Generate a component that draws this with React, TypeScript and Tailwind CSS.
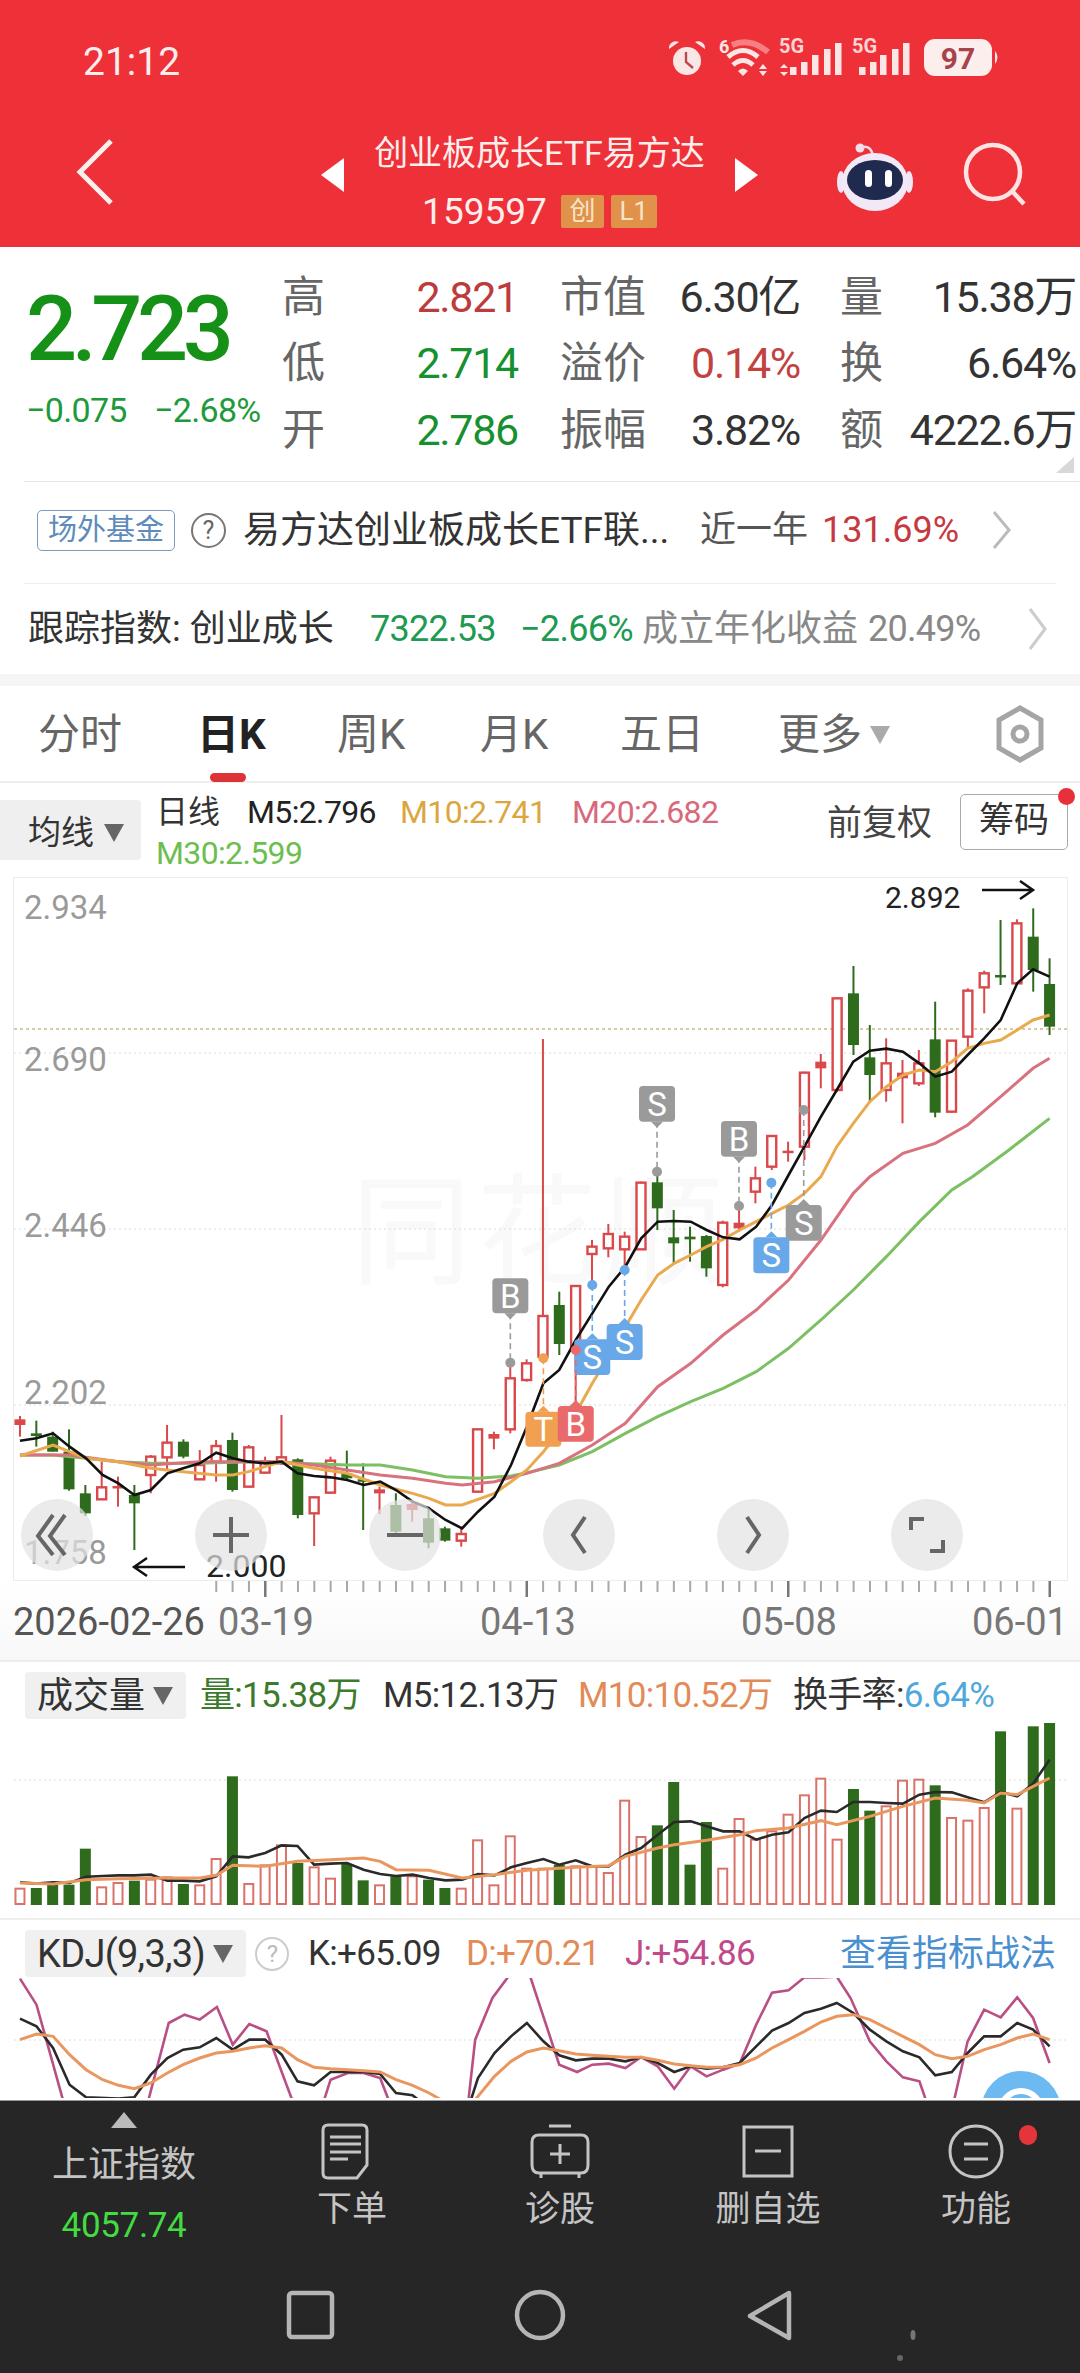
import React from 'react';

type P = [number, number];

const X = (z: number) => z / 1.452;
const Y = (z: number) => 1150 + z / 3;
const pts = (a: P[], fy: (v: number) => number) => a.map(([x, y]) => `${X(x)},${fy(y)}`).join(' ');
const RED = '#d9484a';
const GREEN = '#2f6b1c';

// kind, wick top, wick bottom, body top, body bottom (zoomed chart units)
const candles: [string, number, number, number, number][] = [
  ['R', 798, 860, 808, 825], ['g', 812, 890, 850, 858], ['g', 845, 905, 860, 905], ['g', 838, 1022, 905, 1018],
  ['g', 1005, 1098, 1030, 1090], ['r', 935, 1050, 1012, 1048], ['R', 980, 1070, 1008, 1012], ['g', 1005, 1200, 1035, 1060],
  ['r', 915, 1030, 920, 975], ['r', 825, 960, 878, 922], ['g', 868, 925, 875, 920], ['r', 900, 990, 945, 988],
  ['r', 870, 995, 888, 935], ['g', 848, 1025, 870, 1020], ['r', 885, 1012, 892, 1010], ['r', 920, 970, 935, 968],
  ['r', 795, 945, 922, 940], ['g', 925, 1105, 928, 1095], ['r', 1040, 1188, 1042, 1090], ['r', 920, 1030, 932, 1028],
  ['g', 902, 990, 970, 985], ['g', 940, 1140, 988, 992], ['R', 1010, 1092, 1018, 1030], ['g', 1030, 1150, 1065, 1145],
  ['R', 1055, 1115, 1062, 1080], ['g', 1070, 1195, 1105, 1178], ['g', 1130, 1175, 1135, 1172], ['r', 1130, 1190, 1152, 1172],
  ['r', 838, 1028, 838, 1025], ['R', 845, 898, 852, 866], ['r', 640, 850, 685, 838], ['r', 628, 695, 640, 690],
  ['r', -333, 635, 498, 620], ['g', 425, 615, 465, 582], ['r', 405, 760, 408, 600], ['r', 270, 395, 290, 312],
  ['r', 222, 322, 252, 295], ['r', 245, 350, 260, 298], ['r', 95, 300, 98, 298], ['g', 60, 240, 97, 175],
  ['g', 180, 340, 262, 280], ['g', 230, 335, 260, 268], ['g', 255, 380, 258, 355], ['r', 212, 412, 218, 405],
  ['R', 165, 245, 218, 235], ['r', 50, 160, 85, 125], ['r', -45, 60, -42, 50], ['R', -25, 35, 2, 8],
  ['r', -235, 30, -232, -10], ['R', -288, -185, -265, -245], ['r', -458, -175, -455, -180], ['g', -552, -285, -470, -315],
  ['g', -375, -145, -278, -225], ['r', -335, -145, -260, -180], ['R', -270, -80, -232, -215], ['r', -300, -192, -260, -200],
  ['g', -445, -98, -332, -112], ['r', -330, -112, -328, -115], ['r', -485, -305, -478, -340], ['r', -538, -410, -530, -488],
  ['g', -690, -495, -525, -522], ['r', -692, -495, -680, -500], ['g', -725, -475, -640, -540], ['g', -575, -345, -498, -370],
];

const m5: P[] = [[29,872],[53,865],[77,850],[101,890],[125,925],[149,975],[172,1000],[195,1035],[219,1020],[243,970],[266,955],[290,940],[314,908],[338,925],[361,935],[385,940],[409,935],[432,970],[456,978],[480,982],[504,990],[528,1005],[552,995],[575,1020],[599,1055],[623,1075],[647,1110],[671,1135],[694,1085],[718,1040],[742,945],[765,830],[789,700],[812,660],[836,570],[860,490],[884,410],[908,350],[931,265],[955,215],[979,213],[1003,215],[1026,240],[1050,262],[1074,268],[1098,230],[1121,165],[1145,75],[1168,-10],[1192,-100],[1215,-180],[1239,-265],[1263,-298],[1287,-304],[1311,-295],[1335,-260],[1358,-220],[1382,-235],[1405,-285],[1429,-335],[1453,-390],[1477,-500],[1500,-542],[1524,-520]];
const m10: P[] = [[29,918],[77,885],[101,905],[125,925],[172,935],[219,955],[266,965],[314,975],[338,975],[361,965],[409,935],[456,955],[504,970],[552,1005],[599,1030],[623,1045],[647,1065],[671,1065],[694,1048],[718,1030],[742,995],[765,960],[789,905],[812,845],[836,790],[860,700],[884,620],[908,530],[931,450],[955,375],[979,340],[1003,315],[1026,290],[1050,268],[1074,240],[1098,215],[1121,190],[1145,165],[1168,130],[1192,80],[1215,-10],[1239,-80],[1263,-145],[1287,-190],[1311,-225],[1335,-240],[1358,-235],[1382,-265],[1405,-305],[1429,-320],[1453,-330],[1477,-360],[1500,-390],[1524,-405]];
const m20: P[] = [[29,915],[101,915],[172,935],[219,945],[290,935],[361,935],[409,935],[456,945],[504,960],[552,975],[599,985],[647,1000],[671,1005],[718,995],[765,970],[812,940],[860,885],[908,820],[955,710],[1003,640],[1050,555],[1098,480],[1145,390],[1192,270],[1239,130],[1263,80],[1311,10],[1358,-20],[1405,-75],[1453,-160],[1500,-245],[1524,-275]];
const m30: P[] = [[29,915],[77,915],[125,925],[172,935],[219,940],[290,940],[361,935],[432,940],[504,945],[552,945],[599,960],[647,980],[694,985],[742,978],[765,968],[812,945],[860,905],[908,850],[955,800],[1003,755],[1050,715],[1098,665],[1145,595],[1192,510],[1239,420],[1287,320],[1335,215],[1382,120],[1412,80],[1465,0],[1524,-95]];

// label, colour, x, box top, box bottom, stalk end, pointer up?
const markers: [string, string, number, number, number, number, boolean][] = [
  ['S', '#9a9a9a', 954, -192, -85, 65, false],
  ['B', '#9a9a9a', 1073, -87, 20, 168, false],
  ['B', '#9a9a9a', 741, 385, 490, 638, false],
  ['S', '#9a9a9a', 1167, 165, 272, -120, true],
  ['S', '#69a8e8', 1120, 262, 370, 98, true],
  ['S', '#69a8e8', 860, 568, 675, 405, true],
  ['S', '#69a8e8', 907, 522, 630, 360, true],
  ['T', '#f0a050', 789, 785, 890, 625, true],
  ['B', '#e86a6a', 836, 768, 875, 600, true],
];

const volTops = [752,750,740,740,632,748,735,728,725,718,738,742,663,415,738,682,622,675,688,722,678,727,742,715,715,725,750,752,607,742,595,692,692,680,685,685,705,488,597,562,432,680,552,692,543,605,580,530,472,422,605,453,518,505,428,425,442,540,548,510,280,512,265,250];
const volKinds = 'rggggrrgrrgrrgrrrgrrggrgrggrrrrrrgrrrrrggggrrrrrrrrggrrrgrrrgrgg';
const volM5: P[] = [[29,733],[53,737],[77,733],[101,735],[125,716],[149,714],[172,712],[195,712],[219,710],[243,728],[266,728],[290,730],[314,715],[338,655],[361,658],[385,645],[409,622],[432,624],[456,680],[480,677],[504,675],[528,695],[552,708],[575,714],[599,710],[623,720],[647,727],[671,725],[694,708],[718,712],[742,688],[765,675],[789,663],[812,680],[836,667],[860,685],[884,685],[908,650],[931,630],[955,590],[979,552],[1003,550],[1026,565],[1050,580],[1074,580],[1098,605],[1121,590],[1145,583],[1168,540],[1192,518],[1215,522],[1239,492],[1263,492],[1287,495],[1311,497],[1335,470],[1358,462],[1382,463],[1405,478],[1429,493],[1453,462],[1477,475],[1500,437],[1524,365]];
const volM10: P[] = [[29,735],[77,738],[125,725],[172,722],[243,720],[290,720],[314,712],[338,682],[385,685],[432,670],[480,665],[528,660],[552,670],[575,695],[623,697],[671,720],[718,710],[765,697],[836,688],[884,683],[908,655],[955,630],[979,620],[1026,607],[1074,590],[1098,578],[1145,570],[1192,548],[1215,560],[1263,535],[1311,505],[1358,480],[1405,487],[1429,495],[1453,465],[1477,470],[1524,420]];

const kdjJ: P[] = [[29,-58],[53,20],[92,310],[215,310],[245,75],[268,50],[290,65],[315,27],[338,140],[362,78],[387,100],[425,310],[470,310],[480,245],[505,225],[528,225],[552,240],[565,310],[680,310],[690,125],[715,0],[742,-75],[765,-95],[812,200],[838,222],[860,200],[884,197],[908,210],[931,177],[955,205],[979,272],[1003,205],[1026,235],[1050,215],[1074,197],[1098,80],[1121,-16],[1145,-23],[1168,-62],[1192,-62],[1215,-64],[1235,0],[1263,130],[1287,190],[1311,238],[1335,250],[1345,310],[1385,310],[1405,130],[1429,35],[1453,58],[1477,-2],[1500,60],[1524,195]];
const kdjK: P[] = [[29,62],[53,85],[77,150],[101,260],[125,298],[172,302],[195,298],[219,230],[243,180],[266,155],[290,148],[314,120],[338,155],[362,125],[385,125],[409,170],[432,250],[456,262],[480,222],[505,222],[528,222],[552,228],[575,285],[599,292],[623,330],[680,330],[694,240],[718,165],[742,115],[765,75],[789,130],[812,172],[836,187],[860,182],[884,182],[908,190],[931,178],[955,195],[979,222],[1003,205],[1026,212],[1050,208],[1074,195],[1098,145],[1121,98],[1145,75],[1168,45],[1192,32],[1215,15],[1239,45],[1263,95],[1287,130],[1311,160],[1335,178],[1358,232],[1382,222],[1405,165],[1429,115],[1453,115],[1477,75],[1500,95],[1524,145]];
const kdjD: P[] = [[29,125],[53,108],[77,115],[101,170],[125,215],[149,245],[172,262],[195,272],[219,255],[243,225],[266,200],[290,180],[314,165],[338,160],[362,150],[385,143],[409,150],[432,185],[456,208],[480,212],[505,215],[528,218],[552,222],[575,245],[599,262],[623,285],[640,305],[690,305],[718,235],[742,190],[765,162],[789,150],[812,158],[836,168],[860,172],[884,175],[908,178],[931,178],[955,187],[979,198],[1003,203],[1026,208],[1050,207],[1074,200],[1098,180],[1121,150],[1145,125],[1168,100],[1192,72],[1215,55],[1239,50],[1263,65],[1287,90],[1311,115],[1335,140],[1358,170],[1382,182],[1405,175],[1429,155],[1453,140],[1477,120],[1500,108],[1524,125]];

function StatusIcons() {
  const a = '#fbe6e6';
  const bars1 = [[793, 70], [804, 65], [815, 58], [827, 52], [838, 46]];
  const bars2 = [[862, 70], [873, 65], [883, 58], [895, 52], [906, 46]];
  return (
    <svg viewBox="640 20 380 90" className="w-[380px] h-[90px]">
      <circle cx="687" cy="64" r="14" fill={a} />
      <path d="M669 52 a7 7 0 0 1 10 -7 Z M705 52 a7 7 0 0 0 -10 -7 Z" fill={a} />
      <path d="M686 55 V65 L693 71" stroke="#b84a50" strokeWidth="2.4" fill="none" />
      <text x="719" y="56" fontSize="18" fontWeight="700" fill={a}>6</text>
      <path d="M732 48 Q750 40 768 55" stroke="#f57f82" strokeWidth="6" fill="none" />
      <path d="M728 60 Q743 47 758 60 M733 68 Q743 59 753 68" stroke={a} strokeWidth="5" fill="none" />
      <path d="M738 74 Q743 69 748 74 L743 79 Z" fill={a} />
      <path d="M763 72 l-4 5 h8 Z M763 84 l-4 -5 h8 Z" transform="translate(0,-5)" fill={a} />
      <text x="779" y="56" fontSize="20" fontWeight="700" fill="#fbd4d4">5G</text>
      <path d="M784 67 l-4 4 h8 Z M784 79 l-4 -4 h8 Z" fill={a} />
      {bars1.map(([x, y]) => <rect key={x} x={x - 3} y={y} width="6.5" height={78 - y} fill={a} />)}
      <text x="852" y="56" fontSize="20" fontWeight="700" fill="#fbd4d4">5G</text>
      {bars2.map(([x, y]) => <rect key={x} x={x - 3} y={y} width="6.5" height={78 - y} fill={a} />)}
      <rect x="924" y="42" width="68" height="37" rx="11" fill="#fdeeee" />
      <path d="M995 54 q5 6 0 13 Z" fill={a} />
      <text x="958" y="72" fontSize="30" fontWeight="700" textAnchor="middle" fill="#a6444a">97</text>
    </svg>
  );
}

function RobotIcon() {
  return (
    <svg viewBox="0 0 80 76" className="w-[80px] h-[76px]">
      <path d="M27 9 Q36 7 38 18" stroke="#f6dfe8" strokeWidth="2.5" fill="none" />
      <circle cx="25" cy="10" r="4.5" fill="#f6dfe8" />
      <ellipse cx="6" cy="44" rx="4" ry="11" fill="#efe6f6" />
      <ellipse cx="74" cy="44" rx="4" ry="11" fill="#efe6f6" />
      <ellipse cx="40" cy="44" rx="33" ry="29" fill="#f3e9f6" />
      <ellipse cx="40" cy="42" rx="28" ry="20" fill="#1f2a4e" />
      <rect x="30" y="32" width="7" height="17" rx="3.5" fill="#fff" />
      <rect x="50" y="32" width="7" height="17" rx="3.5" fill="#fff" />
    </svg>
  );
}

function CandleChart() {
  return (
    <svg viewBox="0 877 1080 704" className="absolute inset-0 w-[1080px] h-[704px]">
      <text x="540" y="1275" fontSize="120" textAnchor="middle" fill="#f9f9f9" letterSpacing="6">同花顺</text>
      {[1053, 1229, 1405].map((y) => (
        <line key={y} x1="14" x2="1066" y1={y} y2={y} stroke="#dcdcdc" strokeWidth="1" strokeDasharray="2 3" />
      ))}
      <line x1="14" x2="1068" y1="1029" y2="1029" stroke="#c9b98a" strokeWidth="1.5" strokeDasharray="3 3" />
      {[['2.934', 919], ['2.690', 1071], ['2.446', 1237], ['2.202', 1404], ['1.758', 1564]].map(([t, y]) => (
        <text key={t} x="24" y={y} fontSize="33" fill="#9a9a9a">{t}</text>
      ))}
      <text x="885" y="908" fontSize="30" fill="#222">2.892</text>
      <path d="M982 890 H1033 M1020 881 L1033 890 L1020 899" stroke="#111" strokeWidth="2.5" fill="none" />
      <path d="M185 1567 H134 M147 1558 L134 1567 L147 1576" stroke="#111" strokeWidth="2.5" fill="none" />
      <text x="206" y="1577" fontSize="32" fill="#222">2.000</text>
      {candles.map(([kind, wt, wb, bt, bb], i) => {
        const x = X(29 + 23.73 * i);
        const c = kind === 'g' ? GREEN : RED;
        return (
          <g key={i}>
            <line x1={x} x2={x} y1={Y(wt)} y2={Y(wb)} stroke={c} strokeWidth="2" />
            {kind === 'r' ? (
              <rect x={x - 4.5} y={Y(bt)} width="9" height={Math.max(Y(bb) - Y(bt), 1)} fill="#fff" stroke={c} strokeWidth="2.4" />
            ) : (
              <rect x={x - 5.5} y={Y(bt)} width="11" height={Math.max(Y(bb) - Y(bt), 2.5)} fill={c} />
            )}
          </g>
        );
      })}
      <polyline points={pts(m30, Y)} fill="none" stroke="#7dbf63" strokeWidth="3" />
      <polyline points={pts(m20, Y)} fill="none" stroke="#d9727f" strokeWidth="3" />
      <polyline points={pts(m10, Y)} fill="none" stroke="#e9a94f" strokeWidth="3" />
      <polyline points={pts(m5, Y)} fill="none" stroke="#111" strokeWidth="2.6" />
      {markers.map(([t, c, zx, top, bottom, end, up], i) => {
        const x = X(zx);
        const y1 = Y(top);
        const y2 = Y(bottom);
        return (
          <g key={i}>
            <line x1={x} x2={x} y1={up ? Y(end) : y2} y2={up ? y1 : Y(end)} stroke={c} strokeWidth="1.6" strokeDasharray="6 4" />
            <circle cx={x} cy={Y(end)} r="5" fill={c} />
            <rect x={x - 18} y={y1} width="36" height={y2 - y1} rx="4" fill={c} />
            <path d={up ? `M${x - 6} ${y1} L${x} ${y1 - 6} L${x + 6} ${y1} Z` : `M${x - 6} ${y2} L${x} ${y2 + 6} L${x + 6} ${y2} Z`} fill={c} />
            <text x={x} y={(y1 + y2) / 2 + 12} fontSize="33" textAnchor="middle" fill="#fff">{t}</text>
          </g>
        );
      })}
    </svg>
  );
}

function ChartButton({ children }: { children: React.ReactNode }) {
  return (
    <div className="w-[72px] h-[72px] rounded-full bg-[#e3e3e3]/70 flex items-center justify-center">
      <svg viewBox="0 0 72 72" className="w-[72px] h-[72px]" fill="none" stroke="#666" strokeWidth="4">
        {children}
      </svg>
    </div>
  );
}

function VolumeChart() {
  const fy = (v: number) => 1640 + v / 3;
  return (
    <svg viewBox="0 1725 1080 185" className="w-[1080px] h-[185px]">
      <line x1="14" x2="1066" y1="1782" y2="1782" stroke="#ddd" strokeDasharray="2 3" />
      {volTops.map((top, i) => {
        const kind = volKinds[i];
        const x = X(29 + 23.73 * i);
        const y = fy(top);
        return kind === 'g' ? (
          <rect key={i} x={x - 5.5} y={y} width="11" height={1907 - y} fill={GREEN} />
        ) : (
          <rect key={i} x={x - 4.5} y={y} width="9" height={1906 - y} fill="#fff" stroke="#d9736a" strokeWidth="2" />
        );
      })}
      <polyline points={pts(volM5, fy)} fill="none" stroke="#2a2a2a" strokeWidth="2.6" />
      <polyline points={pts(volM10, fy)} fill="none" stroke="#e9975f" strokeWidth="3" />
    </svg>
  );
}

function KdjChart() {
  const fy = (v: number) => 2000 + v / 3;
  return (
    <svg viewBox="0 1980 1080 120" className="w-[1080px] h-[120px]">
      <line x1="14" x2="1066" y1="2042" y2="2042" stroke="#ddd" strokeDasharray="2 3" />
      <polyline points={pts(kdjJ, fy)} fill="none" stroke="#b94f85" strokeWidth="2.6" />
      <polyline points={pts(kdjK, fy)} fill="none" stroke="#2a2a2a" strokeWidth="2.6" />
      <polyline points={pts(kdjD, fy)} fill="none" stroke="#e9975f" strokeWidth="3" />
      <circle cx="1021" cy="2113" r="40" fill="#6db9f2" />
      <circle cx="1021" cy="2113" r="20" fill="none" stroke="#fff" strokeWidth="6" />
    </svg>
  );
}

function Caret({ className }: { className: string }) {
  return <span className={`w-0 h-0 border-x-[10px] border-x-transparent border-t-[18px] ${className}`} />;
}

export default function App() {
  const tabs = [
    ['分时', 'w-[197px] pl-[38px]'],
    ['日K', 'w-[140px] font-bold text-[#222]'],
    ['周K', 'w-[143px]'],
    ['月K', 'w-[140px]'],
    ['五日', 'w-[158px]'],
  ];
  return (
    <div className="w-[1080px] h-[2373px] overflow-hidden bg-white font-['Roboto','Noto_Sans_CJK_SC',sans-serif] text-[#333]">
      {/* header */}
      <header className="h-[247px] bg-[#ee3138] text-[#fdeeee]">
        <div className="h-[124px] flex items-center justify-between pl-[83px] pr-[60px]">
          <span className="text-[39px] leading-none">21:12</span>
          <StatusIcons />
        </div>
        <div className="h-[123px] flex">
          <div className="w-[321px] pl-[75px] pt-[15px]">
            <svg viewBox="0 0 40 66" className="w-[40px] h-[66px]" fill="none" stroke="#fdeeee" strokeWidth="5">
              <path d="M36 2 L5 33 L36 64" />
            </svg>
          </div>
          <div className="w-[23px] pt-[34px]">
            <div className="w-0 h-0 border-y-[17px] border-y-transparent border-r-[23px] border-r-white" />
          </div>
          <div className="w-[391px] flex flex-col items-center">
            <div className="h-[58px] flex items-center text-[34px] leading-none whitespace-nowrap">创业板成长ETF易方达</div>
            <div className="h-[58px] flex items-center">
              <span className="text-[37px] leading-none mr-[14px]">159597</span>
              <span className="w-[43px] h-[33px] bg-[#e0924a] text-[#f8e4c8] text-[26px] leading-[33px] text-center rounded-[2px] mr-[7px]">创</span>
              <span className="w-[46px] h-[33px] bg-[#e0924a] text-[#f8e4c8] text-[26px] leading-[33px] text-center rounded-[2px]">L1</span>
            </div>
          </div>
          <div className="w-[23px] pt-[34px]">
            <div className="w-0 h-0 border-y-[17px] border-y-transparent border-l-[23px] border-l-white" />
          </div>
          <div className="ml-[77px] pt-[14px]">
            <RobotIcon />
          </div>
          <div className="ml-[47px] pt-[17px]">
            <svg viewBox="0 0 66 66" className="w-[66px] h-[66px]" fill="none" stroke="#fde4e4" strokeWidth="4.5">
              <circle cx="31" cy="31" r="27" />
              <path d="M50 50 L62 63" />
            </svg>
          </div>
        </div>
      </header>

      {/* quote */}
      <section className="relative h-[235px] ml-[24px] border-b border-[#e8e8e8] flex">
        <div className="w-[258px] pl-[2px] pt-[38px]">
          <div className="text-[90px] leading-[90px] text-[#149116] tracking-[-0.06em] font-medium">2.723</div>
          <div className="mt-[18px] flex text-[34px] leading-none text-[#1f9a3a] tracking-[-0.02em]">
            <span className="w-[128px]">−0.075</span>
            <span>−2.68%</span>
          </div>
        </div>
        <div className="pt-[17px] grid grid-cols-[40px_196px_130px_152px_82px_194px] auto-rows-[66.5px] items-center text-[43px] leading-none tracking-[-0.03em] whitespace-nowrap">
          <span className="text-[#666]">高</span>
          <span className="text-right text-[#bc3b3d]">2.821</span>
          <span className="pl-[42px] text-[#666] tracking-normal">市值</span>
          <span className="text-right">6.30亿</span>
          <span className="pl-[40px] text-[#666]">量</span>
          <span className="text-right">15.38万</span>
          <span className="text-[#666]">低</span>
          <span className="text-right text-[#17912f]">2.714</span>
          <span className="pl-[42px] text-[#666] tracking-normal">溢价</span>
          <span className="text-right text-[#c2423f]">0.14%</span>
          <span className="pl-[40px] text-[#666]">换</span>
          <span className="text-right">6.64%</span>
          <span className="text-[#666]">开</span>
          <span className="text-right text-[#17912f]">2.786</span>
          <span className="pl-[42px] text-[#666] tracking-normal">振幅</span>
          <span className="text-right">3.82%</span>
          <span className="pl-[40px] text-[#666]">额</span>
          <span className="text-right">4222.6万</span>
        </div>
        <div className="absolute right-[6px] bottom-[8px] w-0 h-0 border-b-[16px] border-b-[#d8d8d8] border-l-[18px] border-l-transparent" />
      </section>

      {/* fund row */}
      <section className="h-[102px] ml-[24px] mr-[24px] pb-[5px] border-b border-[#eee] flex items-center text-[36px] leading-none">
        <span className="ml-[13px] w-[138px] h-[41px] border-[1.5px] border-[#7b9cc0] rounded-[5px] text-[#5d8bbb] text-[29px] leading-[38px] text-center">场外基金</span>
        <span className="ml-[16px] w-[35px] h-[35px] rounded-full border-2 border-[#777] text-[#666] text-[25px] leading-[31px] text-center">?</span>
        <span className="ml-[17px] w-[457px] text-[37px] whitespace-nowrap">易方达创业板成长ETF联...</span>
        <span className="text-[#555] w-[122px]">近一年</span>
        <span className="text-[#c6393f] w-[170px]">131.69%</span>
        <svg viewBox="0 0 20 40" className="w-[20px] h-[40px]" fill="none" stroke="#bbb" strokeWidth="3">
          <path d="M2 2 L17 20 L2 38" />
        </svg>
      </section>

      {/* track row */}
      <section className="h-[90px] ml-[28px] flex items-center text-[36px] leading-none whitespace-nowrap">
        <span className="w-[342px] text-[#333]">跟踪指数: 创业成长</span>
        <span className="w-[150px] text-[#1e9a52] tracking-[-0.02em]">7322.53</span>
        <span className="w-[122px] text-[#1e9a52] tracking-[-0.02em]">−2.66%</span>
        <span className="w-[226px] text-[#888]">成立年化收益</span>
        <span className="w-[160px] text-[#888] tracking-[-0.02em]">20.49%</span>
        <svg viewBox="0 0 20 44" className="w-[20px] h-[44px]" fill="none" stroke="#ccc" strokeWidth="3">
          <path d="M2 2 L17 22 L2 42" />
        </svg>
      </section>
      <div className="h-[12px] bg-[#f5f5f5]" />

      {/* tabs */}
      <nav className="relative h-[97px] pt-[3px] border-b-2 border-[#eee] flex items-center text-[42px] leading-none text-[#666] whitespace-nowrap">
        {tabs.map(([t, c]) => (
          <span key={t} className={c}>{t}</span>
        ))}
        <span>更多</span>
        <Caret className="ml-[8px] border-t-[#aaa]" />
        <svg viewBox="0 0 50 60" className="absolute left-[995px] top-[18px] w-[50px] h-[60px]" fill="none" stroke="#a5a5a5" strokeWidth="5">
          <path d="M25 4 L46 16 V44 L25 56 L4 44 V16 Z" />
          <circle cx="25" cy="30" r="7" />
        </svg>
        <div className="absolute left-[210px] top-[87px] w-[36px] h-[9px] rounded-full bg-[#dd3336]" />
      </nav>

      {/* MA legend */}
      <section className="relative h-[94px] flex">
        <div className="mt-[17px] w-[141px] h-[60px] pt-[5px] bg-[#efefef] rounded-r-[4px] flex items-center pl-[28px] text-[33px] leading-none">
          <span className="mr-[10px]">均线</span>
          <Caret className="border-t-[#666]" />
        </div>
        <div className="ml-[15px] flex flex-col text-[32px] leading-[41px] tracking-[-0.02em] whitespace-nowrap pt-[9px]">
          <div className="flex">
            <span className="w-[91px] tracking-normal">日线</span>
            <span className="w-[153px] text-[#222]">M5:2.796</span>
            <span className="w-[172px] text-[#dca63f]">M10:2.741</span>
            <span className="text-[#d9697a]">M20:2.682</span>
          </div>
          <span className="text-[#6dbe50]">M30:2.599</span>
        </div>
        <span className="absolute left-[827px] top-[21px] text-[35px] leading-[40px] text-[#444]">前复权</span>
        <span className="absolute left-[960px] top-[11px] w-[108px] h-[56px] border-[1.5px] border-[#aaa] rounded-[5px] text-[35px] leading-[52px] text-center">筹码</span>
        <span className="absolute left-[1058px] top-[5px] w-[17px] h-[17px] rounded-full bg-[#e8303a]" />
      </section>

      {/* main chart */}
      <section className="relative h-[704px]">
        <CandleChart />
        <div className="absolute left-[13px] top-0 w-[1055px] h-[704px] border border-[#ececec]" />
        <div className="absolute left-[21px] top-[622px] flex gap-[102px]">
          <ChartButton><path d="M32 16 L17 37 L32 56 M44 16 L29 37 L44 56" /></ChartButton>
          <ChartButton><path d="M36 18 V54 M18 36 H54" /></ChartButton>
          <ChartButton><path d="M18 36 H54" /></ChartButton>
          <ChartButton><path d="M42 18 L30 36 L42 54" /></ChartButton>
          <ChartButton><path d="M30 18 L42 36 L30 54" /></ChartButton>
          <ChartButton><path d="M20 31 V20 H33 M52 41 V52 H39" /></ChartButton>
        </div>
      </section>

      {/* date axis */}
      <section className="h-[79px] bg-gradient-to-b from-white to-[#f8f8f8]">
        <svg viewBox="0 0 1080 18" className="w-[1080px] h-[18px]">
          {Array.from({ length: 52 }, (_, i) => {
            const x = X(314 + 23.73 * i);
            const major = (i + 13) % 16 === 0;
            return <line key={i} x1={x} x2={x} y1="0" y2={major ? 16 : 11} stroke={major ? '#777' : '#a8a8a8'} strokeWidth={major ? 2.5 : 2} />;
          })}
        </svg>
        <div className="flex pl-[13px] mt-[1px] text-[38px] leading-[44px] text-[#777] whitespace-nowrap">
          <span className="w-[205px] text-[#555]">2026-02-26</span>
          <span className="w-[262px]">03-19</span>
          <span className="w-[261px]">04-13</span>
          <span className="w-[231px]">05-08</span>
          <span>06-01</span>
        </div>
      </section>

      {/* volume */}
      <section className="h-[258px] border-t-2 border-[#eee]">
        <div className="flex items-center mt-[10px] mb-[4px] h-[47px] text-[35px] leading-none tracking-[-0.02em] whitespace-nowrap">
          <div className="ml-[25px] w-[161px] h-[47px] bg-[#f0f0f0] rounded-[4px] flex items-center pl-[12px]">
            <span className="mr-[8px] text-[36px] tracking-normal">成交量</span>
            <Caret className="border-t-[#666]" />
          </div>
          <span className="ml-[14px] w-[183px] text-[#3c7a2c]">量:15.38万</span>
          <span className="w-[195px] text-[#333]">M5:12.13万</span>
          <span className="w-[215px] text-[#e28b58]">M10:10.52万</span>
          <span className="text-[#333]">换手率:</span>
          <span className="text-[#4ea8da]">6.64%</span>
        </div>
        <VolumeChart />
      </section>

      {/* kdj */}
      <section className="h-[182px] overflow-hidden border-t-2 border-[#eee]">
        <div className="flex items-center mt-[10px] mb-[1px] h-[47px] text-[35px] leading-none tracking-[-0.02em] whitespace-nowrap">
          <div className="ml-[25px] w-[221px] h-[47px] bg-[#f0f0f0] rounded-[4px] flex items-center pl-[12px]">
            <span className="w-[176px] text-[38px]">KDJ(9,3,3)</span>
            <Caret className="border-t-[#666]" />
          </div>
          <span className="ml-[9px] w-[34px] h-[34px] rounded-full border-2 border-[#ccc] text-[#bbb] text-[24px] leading-[30px] text-center">?</span>
          <span className="ml-[19px] w-[158px] text-[#333]">K:+65.09</span>
          <span className="w-[159px] text-[#e28b58]">D:+70.21</span>
          <span className="w-[215px] text-[#c04a8a]">J:+54.86</span>
          <span className="text-[36px] tracking-normal text-[#4a90cf]">查看指标战法</span>
        </div>
        <KdjChart />
      </section>

      {/* bottom bar */}
      <footer className="h-[273px] bg-[#262626] border-t border-[#999] text-[#c4c4c4]">
        <div className="h-[188px] flex">
          <div className="w-[248px] flex flex-col items-center pt-[11px]">
            <div className="w-0 h-0 border-x-[13px] border-x-transparent border-b-[16px] border-b-[#bbb]" />
            <span className="mt-[17px] text-[36px] leading-[40px]">上证指数</span>
            <span className="mt-[21px] text-[35px] leading-[40px] text-[#42dc42] tracking-[-0.01em]">4057.74</span>
          </div>
          {[
            ['下单', <path key="a" d="M7 2 H41 Q46 2 46 7 V42 L36 55 H7 Q2 55 2 50 V7 Q2 2 7 2 Z M9 14 H40 M9 21 H40 M9 29 H40 M9 36 H27" />],
            ['诊股', <path key="b" d="M20 3 H42 M10 12 H52 Q59 12 59 19 V42 Q59 50 52 50 H10 Q3 50 3 42 V19 Q3 12 10 12 Z M31 21 V41 M21 31 H41 M12 50 V55 M50 50 V55" />],
            ['删自选', <path key="c" d="M7 4 H55 V53 H7 Z M18 28 H44" />],
            ['功能', <path key="d" d="M31 3 C47 3 57 15 57 28 C57 42 47 54 31 54 C15 54 5 42 5 28 C5 15 15 3 31 3 Z M19 21 H43 M19 36 H43" />],
          ].map(([label, icon]) => (
            <div key={label as string} className="relative w-[208px] flex flex-col items-center pt-[22px]">
              <svg viewBox="0 0 62 58" className="w-[62px] h-[58px]" fill="none" stroke="#c4c4c4" strokeWidth="3">
                {icon}
              </svg>
              <span className="mt-[9px] text-[35px] leading-[40px]">{label as string}</span>
              {label === '功能' && <span className="absolute left-[147px] top-[24px] w-[18px] h-[20px] rounded-full bg-[#e5353a]" />}
            </div>
          ))}
        </div>
        <svg viewBox="0 0 1080 84" className="w-[1080px] h-[84px]" fill="none" stroke="#b5b5b5" strokeWidth="4.5">
          <rect x="289" y="4" width="43" height="44" rx="3" />
          <circle cx="540" cy="26" r="23" />
          <path d="M789 4 L750 27 L789 49 Z" strokeLinejoin="round" />
          <ellipse cx="913" cy="46" rx="2.5" ry="5" fill="#777" stroke="none" />
          <ellipse cx="900" cy="69" rx="3" ry="3" fill="#666" stroke="none" />
        </svg>
      </footer>
    </div>
  );
}
